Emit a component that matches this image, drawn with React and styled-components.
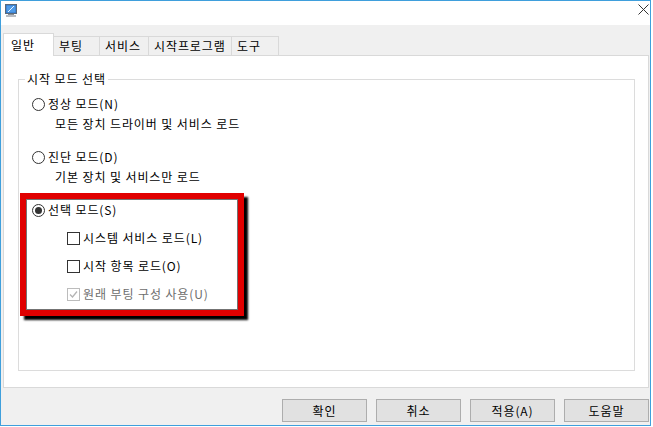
import React from "react";
import styled, { createGlobalStyle } from "styled-components";

const Global = createGlobalStyle`
  html, body { margin: 0; padding: 0; background: #fff; }
  body {
    font-family: "Noto Sans CJK KR", "Noto Sans", sans-serif;
    font-size: 12px;
    letter-spacing: 0.9px;
    color: #000;
  }
`;

const Window = styled.div`
  position: relative;
  box-sizing: border-box;
  width: 651px;
  height: 426px;
  border: 1px solid #3f9fdc;
  display: flex;
  flex-direction: column;
  background: #f0f0f0;
`;

const TitleBar = styled.div`
  flex: none;
  height: 24px;
  box-sizing: border-box;
  background: #fff;
  display: flex;
  align-items: flex-start;
  justify-content: space-between;
  padding: 3px 1px 0 4px;
`;

const Body = styled.div`
  flex: 1;
  display: flex;
  flex-direction: column;
  padding: 8px 1px 0 2px;
`;

const TabStrip = styled.div`
  position: relative;
  z-index: 1;
  height: 22px;
  display: flex;
  align-items: flex-end;
`;

const Tab = styled.div`
  box-sizing: border-box;
  width: ${(p) => p.$w}px;
  height: ${(p) => (p.$active ? 23 : 19)}px;
  margin-bottom: ${(p) => (p.$active ? -1 : 0)}px;
  margin-left: ${(p) => (p.$first ? 0 : -1)}px;
  position: relative;
  z-index: ${(p) => (p.$active ? 2 : 1)};
  background: ${(p) => (p.$active ? "#fff" : "#f0f0f0")};
  border: 1px solid #d9d9d9;
  border-bottom: none;
  display: flex;
  align-items: center;
  padding-left: ${(p) => (p.$active ? 7 : 5)}px;
  padding-bottom: ${(p) => (p.$active ? 1 : 0)}px;
  line-height: 16px;
  white-space: nowrap;
`;

const Panel = styled.div`
  box-sizing: border-box;
  height: 333px;
  background: #fff;
  border: 1px solid #d9d9d9;
  padding: 15px 13px 0 14px;
`;

const GroupBox = styled.fieldset`
  box-sizing: border-box;
  margin: 0;
  padding: 0;
  height: 300px;
  border: 1px solid #dcdcdc;
  min-inline-size: 0;
`;

const Legend = styled.legend`
  margin-left: 6px;
  padding: 0 2px;
  line-height: 16px;
  font-size: 12px;
`;

const Options = styled.div`
  padding: 7px 0 0 13px;
  display: flex;
  flex-direction: column;
`;

const OptionRow = styled.div`
  height: 20px;
  display: flex;
  align-items: center;
  gap: 3px;
  margin-top: ${(p) => p.$gap || 0}px;
  padding-left: ${(p) => p.$indent || 0}px;
  color: ${(p) => (p.$disabled ? "#6d6d6d" : "#000")};
  line-height: 20px;
  white-space: nowrap;
`;

const Desc = styled.div`
  height: 20px;
  line-height: 20px;
  padding-left: 23px;
  white-space: nowrap;
`;

const RadioCircle = styled.span`
  box-sizing: border-box;
  flex: none;
  width: 13px;
  height: 13px;
  border: 1px solid #333;
  border-radius: 50%;
  background: #fff;
  display: flex;
  align-items: center;
  justify-content: center;
`;

const RadioDot = styled.span`
  width: 7px;
  height: 7px;
  border-radius: 50%;
  background: #333;
`;

const CheckBox = styled.span`
  box-sizing: border-box;
  flex: none;
  width: 13px;
  height: 13px;
  border: 1px solid ${(p) => (p.$disabled ? "#bcbcbc" : "#333")};
  background: #fff;
  display: flex;
  align-items: center;
  justify-content: center;
`;

const ButtonRow = styled.div`
  margin-top: 11px;
  display: flex;
  justify-content: flex-end;
  gap: 9px;
`;

const Button = styled.button`
  box-sizing: border-box;
  width: 85px;
  height: 23px;
  padding: 0;
  margin: 0;
  border: 1px solid #adadad;
  background: #e1e1e1;
  font-family: inherit;
  font-size: 12px;
  letter-spacing: 0.9px;
  color: #000;
  line-height: 20px;
`;

const Highlight = styled.div`
  position: absolute;
  left: 19px;
  top: 192px;
  width: 224px;
  height: 123px;
  box-sizing: border-box;
  border: 6px solid #e00000;
  box-shadow: 4px 4px 2px #000, inset 0 0 0 1px rgba(0, 0, 0, 0.55);
  pointer-events: none;
`;

const AppIcon = () => (
  <svg width="12" height="13" viewBox="0 0 12 13">
    <rect x="0.5" y="0.5" width="11" height="9" fill="#2d6fc4" stroke="#5a6a7a" />
    <rect x="1.5" y="1.5" width="9" height="7" fill="#4f9be8" />
    <path d="M3 8 L9 2" stroke="#e8f3ff" strokeWidth="1" />
    <rect x="3" y="10" width="6" height="1" fill="#8a8f96" />
    <rect x="1" y="11" width="10" height="2" fill="#b8bcc2" />
  </svg>
);

const CloseIcon = () => (
  <svg width="11" height="11" viewBox="0 0 11 11">
    <path d="M0.5 0.5 L10.5 10.5 M10.5 0.5 L0.5 10.5" stroke="#333" strokeWidth="1" />
  </svg>
);

const Check = () => (
  <svg width="9" height="9" viewBox="0 0 9 9">
    <path d="M1 4.5 L3.5 7 L8 1.5" fill="none" stroke="#b4b4b4" strokeWidth="1.3" />
  </svg>
);

const tabs = [
  { label: "일반", w: 51, active: true },
  { label: "부팅", w: 47 },
  { label: "서비스", w: 50 },
  { label: "시작프로그램", w: 84 },
  { label: "도구", w: 48 },
];

export default function App() {
  return (
    <>
      <Global />
      <Window>
        <TitleBar>
          <AppIcon />
          <CloseIcon />
        </TitleBar>
        <Body>
          <TabStrip>
            {tabs.map((t, i) => (
              <Tab key={t.label} $w={t.w} $active={t.active} $first={i === 0}>
                {t.label}
              </Tab>
            ))}
          </TabStrip>
          <Panel>
            <GroupBox>
              <Legend>시작 모드 선택</Legend>
              <Options>
                <OptionRow>
                  <RadioCircle />
                  정상 모드(N)
                </OptionRow>
                <Desc>모든 장치 드라이버 및 서비스 로드</Desc>
                <OptionRow $gap={13}>
                  <RadioCircle />
                  진단 모드(D)
                </OptionRow>
                <Desc>기본 장치 및 서비스만 로드</Desc>
                <OptionRow $gap={13}>
                  <RadioCircle>
                    <RadioDot />
                  </RadioCircle>
                  선택 모드(S)
                </OptionRow>
                <OptionRow $gap={8} $indent={35}>
                  <CheckBox />
                  시스템 서비스 로드(L)
                </OptionRow>
                <OptionRow $gap={8} $indent={35}>
                  <CheckBox />
                  시작 항목 로드(O)
                </OptionRow>
                <OptionRow $gap={8} $indent={35} $disabled>
                  <CheckBox $disabled>
                    <Check />
                  </CheckBox>
                  원래 부팅 구성 사용(U)
                </OptionRow>
              </Options>
            </GroupBox>
          </Panel>
          <ButtonRow>
            <Button>확인</Button>
            <Button>취소</Button>
            <Button>적용(A)</Button>
            <Button>도움말</Button>
          </ButtonRow>
        </Body>
        <Highlight />
      </Window>
    </>
  );
}
